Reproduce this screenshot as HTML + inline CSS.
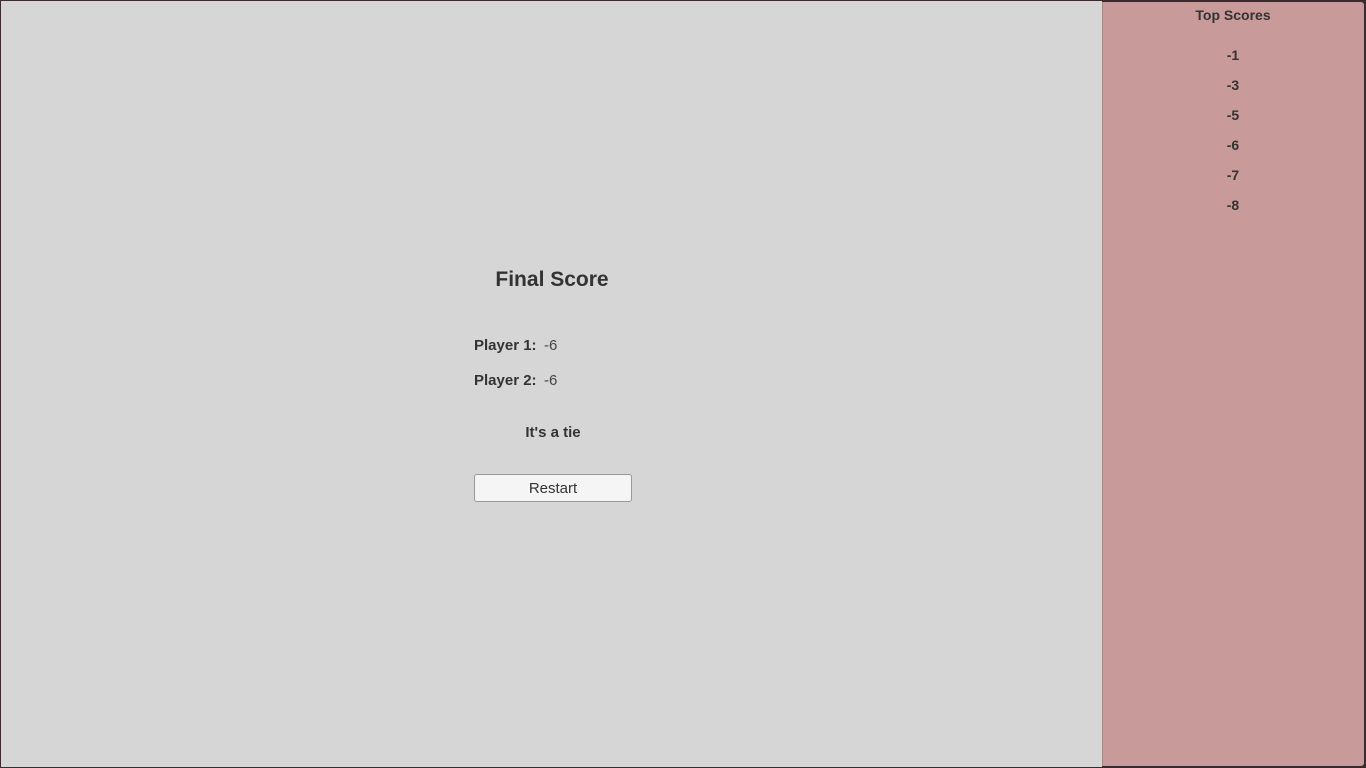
<!DOCTYPE html>
<html><head><meta charset="utf-8"><style>
*{margin:0;padding:0;box-sizing:border-box}
html,body{width:1366px;height:768px;overflow:hidden;background:#3b2a30;font-family:"Liberation Sans",sans-serif;color:#333}
#main{position:absolute;left:1px;top:1px;width:1101px;height:766px;background:#d6d6d6}
#side{position:absolute;left:1102px;top:2px;width:262px;height:764px;background:#c99a9a;border-left:1px solid #a88;border-radius:0 3px 3px 0}
.t{position:absolute;white-space:nowrap}
.b{font-weight:bold}
.c{transform:translateX(-50%)}
#btn{position:absolute;left:474px;top:474px;width:158px;height:28px;background:#f5f5f5;border:1px solid #999;border-radius:3px;text-align:center;line-height:27px;font-size:15px;color:#333}
</style></head><body>
<div id="main"></div>
<div id="side"></div>
<div class="t b c" style="left:552px;top:268px;font-size:21px">Final Score</div>
<div class="t b" style="left:474px;top:337px;font-size:15px">Player 1:</div>
<div class="t" style="left:544px;top:337px;font-size:15px;color:#444">-6</div>
<div class="t b" style="left:474px;top:372px;font-size:15px">Player 2:</div>
<div class="t" style="left:544px;top:372px;font-size:15px;color:#444">-6</div>
<div class="t b c" style="left:553px;top:424px;font-size:15px">It's a tie</div>
<div id="btn">Restart</div>
<div class="t b c" style="left:1233px;top:7px;font-size:14px">Top Scores</div>
<div class="t b c" style="left:1233px;top:47px;font-size:14px">-1</div>
<div class="t b c" style="left:1233px;top:77px;font-size:14px">-3</div>
<div class="t b c" style="left:1233px;top:107px;font-size:14px">-5</div>
<div class="t b c" style="left:1233px;top:137px;font-size:14px">-6</div>
<div class="t b c" style="left:1233px;top:167px;font-size:14px">-7</div>
<div class="t b c" style="left:1233px;top:197px;font-size:14px">-8</div>
</body></html>
